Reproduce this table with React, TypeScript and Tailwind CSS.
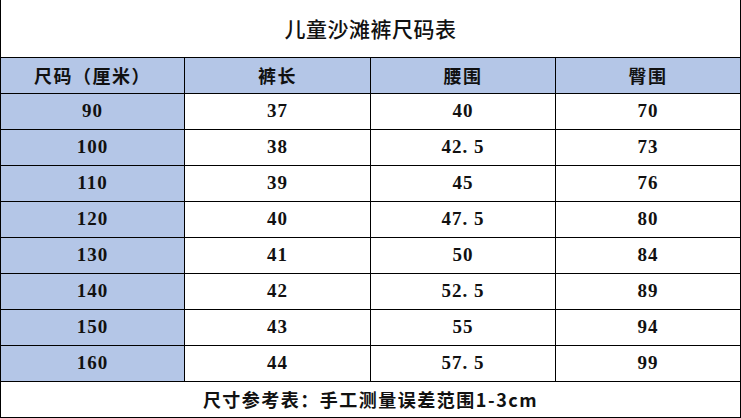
const rows = [
  ["90", "37", "40", "70"],
  ["100", "38", "42.5", "73"],
  ["110", "39", "45", "76"],
  ["120", "40", "47.5", "80"],
  ["130", "41", "50", "84"],
  ["140", "42", "52.5", "89"],
  ["150", "43", "55", "94"],
  ["160", "44", "57.5", "99"],
];

const headers = ["尺码（厘米）", "裤长", "腰围", "臀围"];

const cjk = "font-['Noto_Sans_CJK_SC',sans-serif]";
const num = "font-['Liberation_Serif','Noto_Sans_CJK_SC',serif]";
const cols = "grid grid-cols-[185px_186px_185px_185px]";

export default function App() {
  return (
    <div className="h-[418px] w-[741px] overflow-hidden bg-white text-[#111]">
      <div className="flex h-[58px] items-center justify-center border-b-[1.5px] border-l-[1.5px] border-r-[1.5px] border-black">
        <span className={`${cjk} text-[21px] font-medium tracking-[0.5px]`}>儿童沙滩裤尺码表</span>
      </div>
      <div className={`${cols} h-[36px] bg-[#b4c6e7]`}>
        {headers.map((h, i) => (
          <div
            key={h}
            className={`flex items-center justify-center border-b-[1.5px] border-r-[1.5px] border-black ${cjk} text-[18px] font-bold tracking-[1.5px] ${i === 0 ? "border-l-[1.5px]" : ""}`}
          >
            {h}
          </div>
        ))}
      </div>
      {rows.map((r) => (
        <div key={r[0]} className={`${cols} h-[36px]`}>
          {r.map((v, i) => (
            <div
              key={i}
              className={`flex items-center justify-center border-b-[1.5px] border-r-[1.5px] border-black ${num} text-[19px] font-bold tracking-[1px] ${i === 0 ? "border-l-[1.5px] bg-[#b4c6e7]" : "bg-white"}`}
            >
              {v.replace(".", ". ")}
            </div>
          ))}
        </div>
      ))}
      <div className="flex h-[36px] items-center justify-center border-b-[1.5px] border-l-[1.5px] border-r-[1.5px] border-black">
        <span className={`${cjk} text-[18px] font-bold tracking-[1.5px]`}>尺寸参考表：手工测量误差范围1-3cm</span>
      </div>
    </div>
  );
}
